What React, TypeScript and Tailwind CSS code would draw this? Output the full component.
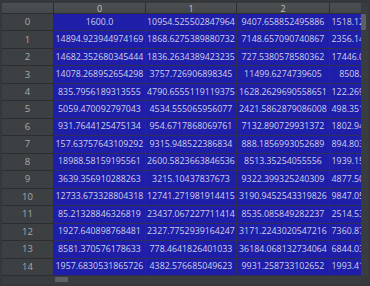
const rows: string[][] = [
  ['1600.0', '10954.525502847964', '9407.658852495886', '1518.1274630098512'],
  ['14894.923944974169', '1868.6275389880732', '7148.657090740867', '2356.1498302716654'],
  ['14682.352680345444', '1836.2634389423235', '727.5380578580362', '17446.082649317315'],
  ['14078.268952654298', '3757.726906898345', '11499.6274739605', '8508.9617305285'],
  ['835.7956189313555', '4790.6555119119375', '1628.2629690558651', '122.26915045302734'],
  ['5059.470092797043', '4534.555065956077', '2421.5862879086008', '498.35173280953656'],
  ['931.7644125475134', '954.6717868069761', '7132.890729931372', '1802.9416376050273'],
  ['157.63757643109292', '9315.948522386834', '888.1856993052689', '894.80328760117345'],
  ['18988.58159195561', '2600.5823663846536', '8513.35254055556', '1939.1582608471305'],
  ['3639.356910288263', '3215.10437837673', '9322.399325240309', '4877.5092136609215'],
  ['12733.673328804318', '12741.271981914415', '3190.9452543319826', '9847.0516638201647'],
  ['85.21328846326819', '23437.067227711414', '8535.085849282237', '2514.5368217041907'],
  ['1927.640898768481', '2327.7752939164247', '3171.2243020547216', '7360.8741903358241'],
  ['8581.370576178633', '778.4641826401033', '36184.068132734064', '6844.0317265039982'],
  ['1957.6830531865726', '4382.576685049623', '9931.258733102652', '1993.4120867719354'],
];

const colW = ['w-[92px]', 'w-[91px]', 'w-[93px]', 'w-[92px]'];

export default function App() {
  return (
    <div
      className="w-[370px] h-[286px] bg-[#36393b] pt-[3px] pl-[2px] overflow-hidden"
      style={{ fontFamily: '"Open Sans", "Noto Sans", sans-serif' }}
    >
      <div className="flex">
        {/* table viewport */}
        <div className="w-[359px] h-[273px] overflow-hidden">
          {/* header */}
          <div className="flex h-[11px] w-[460px]">
            <div className="w-[52px] shrink-0 bg-gradient-to-b from-[#4d5052] to-[#45484a] border-r border-b border-[#2c2e30]" />
            {['0', '1', '2', '3'].map((h, i) => (
              <div
                key={h}
                className={`${colW[i]} shrink-0 bg-gradient-to-b from-[#4d5052] to-[#45484a] border-r border-b border-[#2c2e30] flex items-center justify-center text-[9px] leading-none text-[#bfc3c6]`}
              >
                {h}
              </div>
            ))}
          </div>
          {/* body */}
          <div className="flex flex-col h-[262px] w-[460px]">
            {rows.map((r, ri) => (
              <div key={ri} className="flex flex-1 min-h-0">
                <div className="w-[52px] shrink-0 bg-[#3d4042] border-r border-b border-[#2c2e30] flex items-center justify-center text-[9.5px] text-[#a6aaad]">
                  {ri}
                </div>
                {r.map((v, ci) => (
                  <div
                    key={ci}
                    className={`${colW[ci]} shrink-0 bg-[#1e1ea8] border-r border-b border-[#2e2f52] flex items-center justify-center text-[8.8px] text-[#cfd0e6] whitespace-nowrap overflow-hidden`}
                  >
                    {v}
                  </div>
                ))}
              </div>
            ))}
          </div>
        </div>
        {/* vertical scrollbar */}
        <div className="w-[7px] h-[273px] bg-[#3a3d3f] pt-[11px]">
          <div className="w-[5px] h-[16px] bg-[#5e6163] rounded-[1px]" />
        </div>
      </div>
      {/* horizontal scrollbar */}
      <div className="h-[8px] w-[359px] bg-[#3a3d3f] pt-px pl-[53px]">
        <div className="w-[13px] h-[5px] bg-[#5e6163] rounded-[1px]" />
      </div>
    </div>
  );
}
